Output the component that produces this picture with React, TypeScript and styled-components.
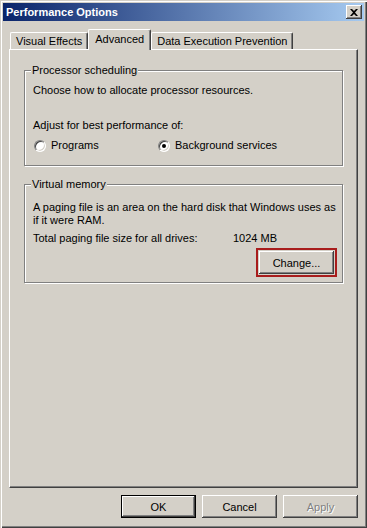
import React from "react";
import styled, { createGlobalStyle, css } from "styled-components";

const GlobalStyle = createGlobalStyle`
  html, body {
    margin: 0;
    padding: 0;
    background: #d4d0c8;
  }
  body {
    font-family: "Liberation Sans", Arial, sans-serif;
    font-size: 11px;
    color: #000;
  }
`;

const FACE = "#d4d0c8";
const SHADOW = "#808080";
const DARK = "#404040";

const Window = styled.div`
  box-sizing: border-box;
  width: 367px;
  height: 528px;
  padding: 3px;
  display: flex;
  flex-direction: column;
  background: ${FACE};
  box-shadow: inset 1px 1px ${FACE}, inset 2px 2px #fff, inset -1px -1px ${DARK},
    inset -2px -2px ${SHADOW};
`;

const TitleBar = styled.div`
  height: 18px;
  display: flex;
  align-items: center;
  padding-left: 3px;
  background: linear-gradient(to right, #0a246a, #a6caf0);
`;

const Title = styled.span`
  flex: 1;
  color: #fff;
  font-weight: bold;
  font-size: 11px;
`;

const CloseButton = styled.div`
  box-sizing: border-box;
  width: 16px;
  height: 14px;
  margin-right: 2px;
  display: flex;
  align-items: center;
  justify-content: center;
  background: ${FACE};
  box-shadow: inset -1px -1px ${DARK}, inset 1px 1px #fff, inset -2px -2px ${SHADOW};
`;

const Body = styled.div`
  flex: 1;
  display: flex;
  flex-direction: column;
  padding: 0 6px;
`;

const TabStrip = styled.div`
  display: flex;
  align-items: flex-end;
  height: 20px;
  margin-top: 8px;
  padding-left: 1px;
  position: relative;
  z-index: 1;
`;

const Tab = styled.div<{ $active?: boolean }>`
  box-sizing: border-box;
  height: 17px;
  padding: 0 5px;
  display: flex;
  align-items: center;
  white-space: nowrap;
  background: ${FACE};
  border-top: 1px solid #fff;
  border-left: 1px solid #fff;
  border-right: 1px solid ${DARK};
  border-radius: 2px 2px 0 0;
  box-shadow: inset -1px 0 ${SHADOW};
  ${({ $active }) =>
    $active &&
    css`
      height: 21px;
      margin-bottom: -1px;
      padding: 0 6px 2px;
    `}
`;

const Panel = styled.div`
  box-sizing: border-box;
  height: 439px;
  display: flex;
  flex-direction: column;
  padding: 14px 14px 0 14px;
  border-top: 1px solid #fff;
  border-left: 1px solid #fff;
  border-right: 1px solid ${DARK};
  border-bottom: 1px solid ${DARK};
  box-shadow: inset -1px -1px ${SHADOW};
`;

const GroupBox = styled.fieldset`
  margin: 0;
  padding: 0 5px 0 8px;
  border: 1px solid ${SHADOW};
  box-shadow: 1px 1px #fff, inset 1px 1px #fff;
  & + & {
    margin-top: 12px;
  }
`;

const Legend = styled.legend`
  margin-left: -2px;
  padding: 0 1px;
  line-height: 13px;
  background: ${FACE};
`;

const Line = styled.div<{ $gap?: number }>`
  line-height: 13px;
  margin-top: ${({ $gap }) => $gap ?? 0}px;
  white-space: nowrap;
`;

const RadioRow = styled.div`
  display: grid;
  grid-template-columns: 124px auto;
  margin: 7px 0 13px 1px;
`;

const RadioOption = styled.label`
  display: flex;
  align-items: center;
  gap: 5px;
  line-height: 13px;
`;

const Radio = styled.span<{ $checked?: boolean }>`
  box-sizing: border-box;
  width: 12px;
  height: 12px;
  border-radius: 50%;
  background: #fff;
  border: 1px solid;
  border-color: ${SHADOW} #fff #fff ${SHADOW};
  box-shadow: inset 1px 1px ${DARK}, inset -1px -1px ${FACE};
  display: flex;
  align-items: center;
  justify-content: center;
  &::after {
    content: "";
    width: 4px;
    height: 4px;
    border-radius: 50%;
    background: ${({ $checked }) => ($checked ? "#000" : "transparent")};
  }
`;

const SizeRow = styled.div`
  display: grid;
  grid-template-columns: 200px auto;
  line-height: 13px;
  margin-top: 5px;
`;

const ButtonLine = styled.div`
  display: flex;
  justify-content: flex-end;
  margin: 3px 0 5px;
`;

const Highlight = styled.div`
  padding: 1px;
  border: 2px solid #a81c1c;
  display: flex;
`;

const Button = styled.button<{ $default?: boolean; $disabled?: boolean }>`
  box-sizing: border-box;
  width: 75px;
  height: 23px;
  padding: 0;
  font: inherit;
  color: ${({ $disabled }) => ($disabled ? SHADOW : "#000")};
  text-shadow: ${({ $disabled }) => ($disabled ? "1px 1px #fff" : "none")};
  background: ${FACE};
  border: none;
  box-shadow: inset -1px -1px ${DARK}, inset 1px 1px #fff, inset -2px -2px ${SHADOW};
  ${({ $default }) =>
    $default &&
    css`
      border: 1px solid #000;
    `}
`;

const Footer = styled.div`
  display: flex;
  justify-content: flex-end;
  gap: 6px;
  margin-top: 7px;
`;

const App: React.FC = () => {
  return (
    <>
      <GlobalStyle />
      <Window>
        <TitleBar>
          <Title>Performance Options</Title>
          <CloseButton>
            <svg width="8" height="7" viewBox="0 0 8 7">
              <path d="M0 0h2l2 2 2-2h2L5 3.5 8 7H6L4 5 2 7H0l3-3.5z" fill="#000" />
            </svg>
          </CloseButton>
        </TitleBar>
        <Body>
          <TabStrip>
            <Tab>Visual Effects</Tab>
            <Tab $active>Advanced</Tab>
            <Tab>Data Execution Prevention</Tab>
          </TabStrip>
          <Panel>
            <GroupBox>
              <Legend>Processor scheduling</Legend>
              <Line $gap={7}>Choose how to allocate processor resources.</Line>
              <Line $gap={22}>Adjust for best performance of:</Line>
              <RadioRow>
                <RadioOption>
                  <Radio />
                  Programs
                </RadioOption>
                <RadioOption>
                  <Radio $checked />
                  Background services
                </RadioOption>
              </RadioRow>
            </GroupBox>
            <GroupBox>
              <Legend>Virtual memory</Legend>
              <Line $gap={10}>A paging file is an area on the hard disk that Windows uses as</Line>
              <Line>if it were RAM.</Line>
              <SizeRow>
                <span>Total paging file size for all drives:</span>
                <span>1024 MB</span>
              </SizeRow>
              <ButtonLine>
                <Highlight>
                  <Button>Change...</Button>
                </Highlight>
              </ButtonLine>
            </GroupBox>
          </Panel>
          <Footer>
            <Button $default>OK</Button>
            <Button>Cancel</Button>
            <Button $disabled>Apply</Button>
          </Footer>
        </Body>
      </Window>
    </>
  );
};

export default App;
